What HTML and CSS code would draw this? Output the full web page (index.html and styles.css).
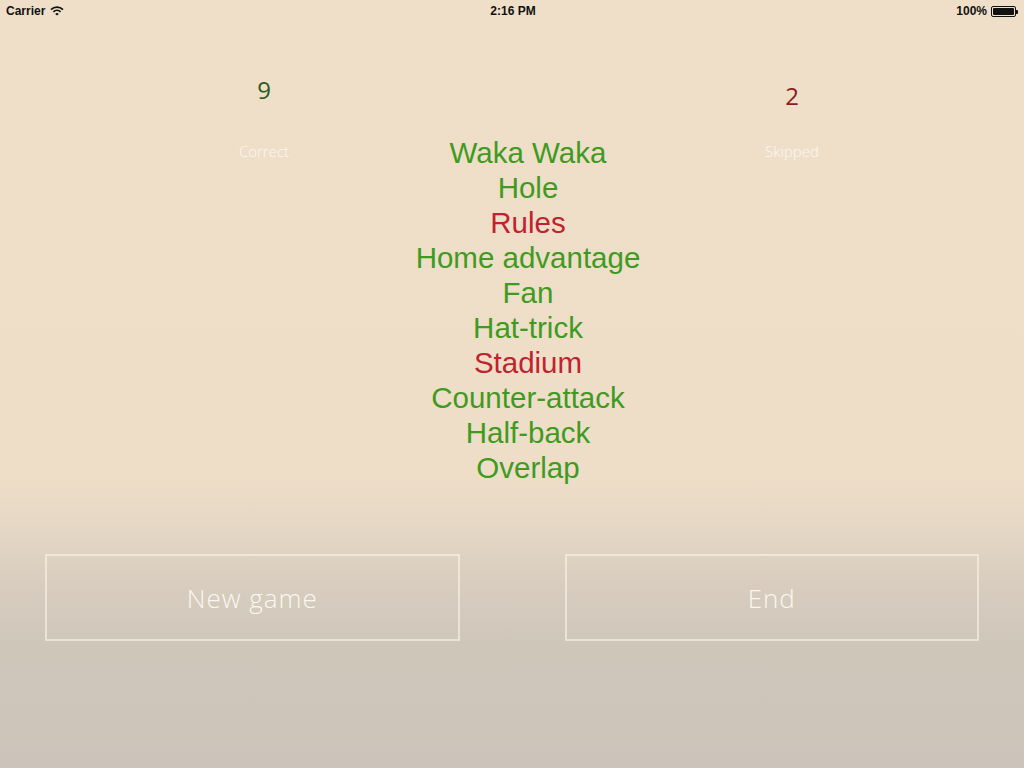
FILE: index.html
```html
<!DOCTYPE html>
<html lang="en">
<head>
    <meta charset="UTF-8">
    <meta name="viewport" content="width=device-width, initial-scale=1.0">
    <title>Results</title>
    <link rel="stylesheet" href="styles.css">
</head>
<body>
    <div class="status-bar">
        <div class="carrier">
            Carrier
            <svg class="wifi" width="14" height="10" viewBox="0 0 14 10">
                <path d="M1 3.6 A8.5 8.5 0 0 1 13 3.6" fill="none" stroke="#111" stroke-width="1.7"/>
                <path d="M3.4 5.9 A5.2 5.2 0 0 1 10.6 5.9" fill="none" stroke="#111" stroke-width="1.7"/>
                <path d="M7 9.6 L5.2 7.9 A2.6 2.6 0 0 1 8.8 7.9 Z" fill="#111"/>
            </svg>
        </div>
        <div class="time">2:16 PM</div>
        <div class="battery">
            100%
            <span class="battery-icon"><span class="battery-fill"></span></span>
        </div>
    </div>

    <div class="board">
        <div class="score correct">
            <div class="score-value">9</div>
            <div class="score-label">Correct</div>
        </div>

        <ul class="words">
            <li class="word guessed">Waka Waka</li>
            <li class="word guessed">Hole</li>
            <li class="word skipped">Rules</li>
            <li class="word guessed">Home advantage</li>
            <li class="word guessed">Fan</li>
            <li class="word guessed">Hat-trick</li>
            <li class="word skipped">Stadium</li>
            <li class="word guessed">Counter-attack</li>
            <li class="word guessed">Half-back</li>
            <li class="word guessed">Overlap</li>
        </ul>

        <div class="score skipped-score">
            <div class="score-value">2</div>
            <div class="score-label">Skipped</div>
        </div>
    </div>

    <div class="actions">
        <button class="action-btn">New game</button>
        <button class="action-btn">End</button>
    </div>
</body>
</html>
```

FILE: styles.css
```css
* {
    box-sizing: border-box;
}
html, body {
    margin: 0;
    height: 100%;
}
body {
    width: 1024px;
    height: 768px;
    overflow: hidden;
    font-family: "Liberation Sans", Arial, sans-serif;
    background: linear-gradient(180deg, #efdfc9 0%, #eedec8 62%, #e6d8c5 68%, #d8cdbf 76%, #cfc6ba 84%, #ccc4ba 100%);
}
.status-bar {
    height: 20px;
    display: flex;
    align-items: center;
    justify-content: space-between;
    padding: 2px 6px 0;
    font-size: 12px;
    font-weight: bold;
    color: #111;
}
.carrier {
    display: flex;
    align-items: center;
    gap: 5px;
    width: 120px;
}
.time {
    flex: 1;
    text-align: center;
    padding-left: 2px;
}
.battery {
    display: flex;
    align-items: center;
    justify-content: flex-end;
    gap: 4px;
    width: 120px;
    padding-right: 2px;
}
.battery-icon {
    width: 25px;
    height: 11px;
    border: 1px solid #111;
    border-radius: 2px;
    padding: 1px;
    position: relative;
    display: inline-block;
}
.battery-icon::after {
    content: "";
    position: absolute;
    right: -3px;
    top: 3px;
    width: 2px;
    height: 4px;
    background: #111;
    border-radius: 0 1px 1px 0;
}
.battery-fill {
    display: block;
    height: 100%;
    background: #111;
    border-radius: 1px;
}
.board {
    display: grid;
    grid-template-columns: 240px 288px 240px;
    padding-left: 144px;
    margin-top: 50px;
}
.score {
    text-align: center;
    font-family: "Open Sans", sans-serif;
}
.score-value {
    font-size: 24px;
    line-height: 40px;
}
.score-label {
    margin-top: 31px;
    font-size: 15px;
    line-height: 20px;
    font-weight: 300;
    color: rgba(255, 255, 255, 0.8);
}
.correct .score-value {
    color: #2b5a20;
}
.skipped-score .score-value {
    color: #8a1c1c;
    padding-top: 8px;
    line-height: 35px;
}
.skipped-score .score-label {
    margin-top: 28px;
}
.words {
    list-style: none;
    margin: 0;
    padding: 65px 0 0;
    text-align: center;
}
.word {
    font-size: 29.5px;
    line-height: 35px;
    white-space: nowrap;
}
.word.guessed {
    color: #3f9b1f;
}
.word.skipped {
    color: #c0232e;
}
.actions {
    display: flex;
    gap: 105px;
    padding: 0 45px;
    margin-top: 69px;
}
.action-btn {
    flex: 1;
    height: 87px;
    background: transparent;
    border: 2px solid rgba(255, 250, 240, 0.55);
    color: #fbf7f0;
    font-family: "Open Sans", sans-serif;
    font-weight: 300;
    font-size: 26px;
    letter-spacing: 1px;
    cursor: pointer;
}
```
